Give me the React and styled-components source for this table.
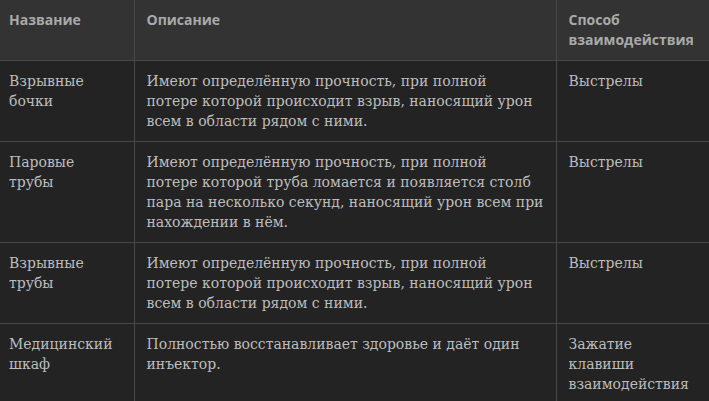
import styled, { createGlobalStyle } from 'styled-components'

const GlobalStyle = createGlobalStyle`
	html, body {
		margin: 0;
		padding: 0;
		background-color: #232323;
	}
`

const Table = styled.table`
	width: 709px;
	border-collapse: collapse;
	table-layout: fixed;
	background-color: #232323;
	color: #bdbdbd;
`

const HeadCell = styled.th`
	box-sizing: border-box;
	width: ${props => props.$width}px;
	padding: 10px 12px 10px ${props => (props.$first ? 9 : 12)}px;
	background-color: #333333;
	color: #a9a9a9;
	font-family: 'Open Sans', 'Noto Sans', sans-serif;
	font-weight: 700;
	font-size: 14px;
	line-height: 20px;
	text-align: left;
	vertical-align: top;
	border-right: 1px solid #484848;
	border-bottom: 1px solid #484848;

	&:last-child {
		border-right: none;
	}
`

const Row = styled.tr`
	border-bottom: 1px solid #484848;
`

const Cell = styled.td`
	box-sizing: border-box;
	padding: 10px 12px 10px ${props => (props.$first ? 9 : 12)}px;
	font-family: 'DejaVu Serif', 'Liberation Serif', serif;
	font-size: 14px;
	line-height: 20px;
	vertical-align: top;
	border-right: 1px solid #484848;

	&:last-child {
		border-right: none;
	}
`

const Line = styled.span`
	display: block;
	white-space: nowrap;
`

const rows = [
	{
		name: 'Взрывные бочки',
		desc: [
			'Имеют определённую прочность, при полной',
			'потере которой происходит взрыв, наносящий урон',
			'всем в области рядом с ними.',
		],
		action: 'Выстрелы',
	},
	{
		name: 'Паровые трубы',
		desc: [
			'Имеют определённую прочность, при полной',
			'потере которой труба ломается и появляется столб',
			'пара на несколько секунд, наносящий урон всем при',
			'нахождении в нём.',
		],
		action: 'Выстрелы',
	},
	{
		name: 'Взрывные трубы',
		desc: [
			'Имеют определённую прочность, при полной',
			'потере которой происходит взрыв, наносящий урон',
			'всем в области рядом с ними.',
		],
		action: 'Выстрелы',
	},
	{
		name: 'Медицинский шкаф',
		desc: ['Полностью восстанавливает здоровье и даёт один', 'инъектор.'],
		action: 'Зажатие клавиши взаимодействия',
	},
]

export default function App() {
	return (
		<>
			<GlobalStyle />
			<Table>
				<thead>
					<tr>
						<HeadCell $width={134} $first>
							Название
						</HeadCell>
						<HeadCell $width={422}>Описание</HeadCell>
						<HeadCell $width={153}>Способ взаимодействия</HeadCell>
					</tr>
				</thead>
				<tbody>
					{rows.map((row, i) => (
						<Row key={i}>
							<Cell $first>{row.name}</Cell>
							<Cell>
								{row.desc.map(line => (
									<Line key={line}>{line}</Line>
								))}
							</Cell>
							<Cell>{row.action}</Cell>
						</Row>
					))}
				</tbody>
			</Table>
		</>
	)
}
